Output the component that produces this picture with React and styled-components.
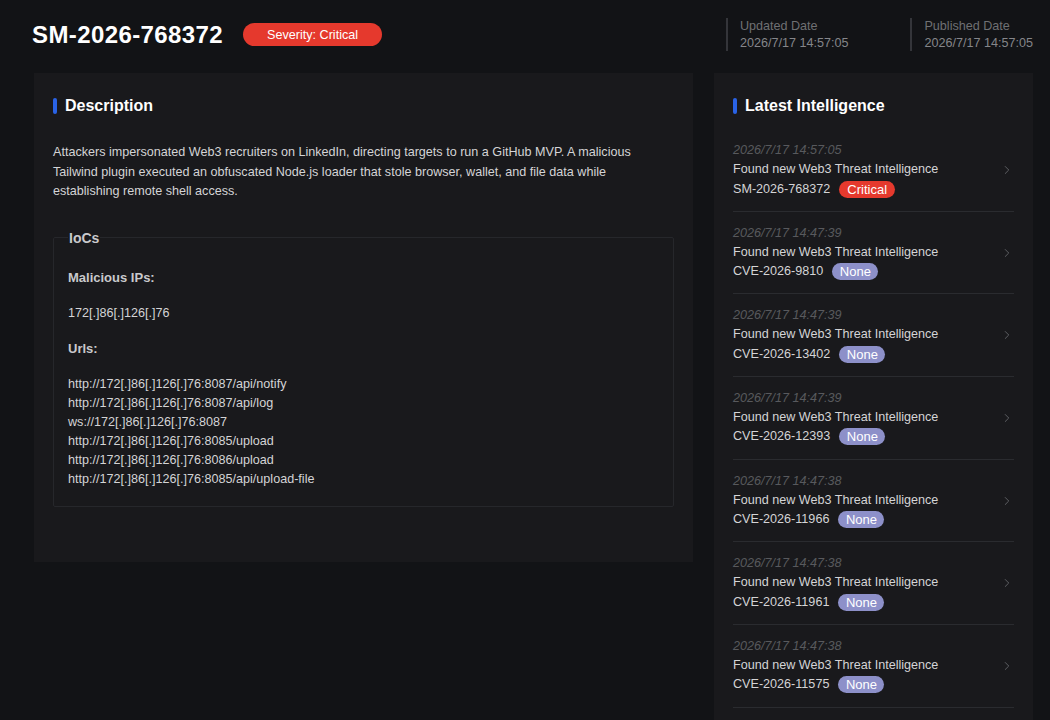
import React from "react";
import styled, { createGlobalStyle } from "styled-components";
import { ChevronRight } from "lucide-react";

const GlobalStyle = createGlobalStyle`
  html, body {
    margin: 0;
    padding: 0;
    background: #121316;
    font-family: "Liberation Sans", Arial, sans-serif;
  }
  * { box-sizing: border-box; }
`;

const Page = styled.div`
  height: 100vh;
  overflow: hidden;
  background: #121316;
`;

const Header = styled.header`
  display: flex;
  align-items: center;
  height: 69px;
  padding: 0 17px 0 32px;
`;

const Title = styled.h1`
  margin: 0;
  font-size: 24px;
  font-weight: 700;
  color: #fff;
  letter-spacing: 0.4px;
`;

const SeverityBadge = styled.span`
  display: inline-flex;
  align-items: center;
  height: 23px;
  margin-left: 20px;
  padding: 0 24px;
  border-radius: 12px;
  background: #e5392d;
  color: #fff;
  font-size: 12.6px;
`;

const Dates = styled.div`
  display: flex;
  gap: 62px;
  margin-left: auto;
`;

const DateBlock = styled.div`
  border-left: 2px solid #34353a;
  padding-left: 12px;
  display: flex;
  flex-direction: column;
  gap: 1px;
  font-size: 12.6px;
  line-height: 16px;
`;

const DateLabel = styled.span`
  color: #6f7073;
`;

const DateValue = styled.span`
  color: #85868a;
`;

const Main = styled.main`
  display: flex;
  align-items: flex-start;
  gap: 21px;
  padding: 4px 17px 0 34px;
`;

const Card = styled.section`
  background: #19191c;
  width: ${(p) => p.width}px;
  padding: ${(p) => p.pad};
  flex-shrink: 0;
`;

const SectionTitle = styled.h2`
  display: flex;
  align-items: center;
  gap: 8px;
  margin: 0;
  padding-top: 1px;
  font-size: 16px;
  line-height: 24px;
  font-weight: 700;
  color: #fff;

  &::before {
    content: "";
    width: 4px;
    height: 16px;
    border-radius: 2px;
    background: #2a63e6;
  }
`;

const Description = styled.p`
  margin: 25px 0 0;
  font-size: 12.6px;
  line-height: 19.5px;
  color: #d4d4d6;
`;

const IocBox = styled.fieldset`
  margin: 26px 0 0;
  padding: 0 14px 17px;
  border: 1px solid #26272b;
  border-radius: 2px;
`;

const Legend = styled.legend`
  padding: 0 1px;
  font-size: 14px;
  line-height: 20px;
  font-weight: 700;
  color: #c9c9cc;
`;

const IocLabel = styled.div`
  margin-top: ${(p) => p.top}px;
  font-size: 13px;
  line-height: 20px;
  font-weight: 700;
  color: #c9c9cc;
`;

const IocList = styled.div`
  margin-top: 16px;
  font-size: 12.6px;
  line-height: 19px;
  color: #d4d4d6;
`;

const FeedList = styled.div`
  margin-top: 11px;
  display: flex;
  flex-direction: column;
`;

const FeedItem = styled.div`
  display: flex;
  align-items: center;
  padding: 12px 0 11.67px;
  border-bottom: 1px solid #2a2b2f;
`;

const FeedBody = styled.div`
  flex: 1;
  display: flex;
  flex-direction: column;
  font-size: 12.6px;
  line-height: 19px;
  color: #d4d4d6;
`;

const FeedDate = styled.span`
  font-style: italic;
  color: #58595d;
`;

const FeedId = styled.div`
  display: flex;
  align-items: center;
  gap: 9px;
  height: 20px;
`;

const Tag = styled.span`
  display: inline-flex;
  align-items: center;
  height: 17px;
  padding: 0 ${(p) => (p.level === "Critical" ? 8 : 7.5)}px;
  border-radius: 9px;
  background: ${(p) => (p.level === "Critical" ? "#e5392d" : "#8d90c9")};
  color: #fff;
  font-size: 13px;
`;

const Chevron = styled(ChevronRight)`
  color: #66676b;
  flex-shrink: 0;
`;

const urls = [
  "http://172[.]86[.]126[.]76:8087/api/notify",
  "http://172[.]86[.]126[.]76:8087/api/log",
  "ws://172[.]86[.]126[.]76:8087",
  "http://172[.]86[.]126[.]76:8085/upload",
  "http://172[.]86[.]126[.]76:8086/upload",
  "http://172[.]86[.]126[.]76:8085/api/upload-file",
];

const feed = [
  { date: "2026/7/17 14:57:05", id: "SM-2026-768372", level: "Critical" },
  { date: "2026/7/17 14:47:39", id: "CVE-2026-9810", level: "None" },
  { date: "2026/7/17 14:47:39", id: "CVE-2026-13402", level: "None" },
  { date: "2026/7/17 14:47:39", id: "CVE-2026-12393", level: "None" },
  { date: "2026/7/17 14:47:38", id: "CVE-2026-11966", level: "None" },
  { date: "2026/7/17 14:47:38", id: "CVE-2026-11961", level: "None" },
  { date: "2026/7/17 14:47:38", id: "CVE-2026-11575", level: "None" },
];

export default function App() {
  return (
    <Page>
      <GlobalStyle />
      <Header>
        <Title>SM-2026-768372</Title>
        <SeverityBadge>Severity: Critical</SeverityBadge>
        <Dates>
          <DateBlock>
            <DateLabel>Updated Date</DateLabel>
            <DateValue>2026/7/17 14:57:05</DateValue>
          </DateBlock>
          <DateBlock>
            <DateLabel>Published Date</DateLabel>
            <DateValue>2026/7/17 14:57:05</DateValue>
          </DateBlock>
        </Dates>
      </Header>

      <Main>
        <Card width={659} pad="20px 19px 55px">
          <SectionTitle>Description</SectionTitle>
          <Description>
            Attackers impersonated Web3 recruiters on LinkedIn, directing targets to run a GitHub MVP. A malicious
            Tailwind plugin executed an obfuscated Node.js loader that stole browser, wallet, and file data while
            establishing remote shell access.
          </Description>
          <IocBox>
            <Legend>IoCs</Legend>
            <IocLabel top={20}>Malicious IPs:</IocLabel>
            <IocList>172[.]86[.]126[.]76</IocList>
            <IocLabel top={16}>Urls:</IocLabel>
            <IocList>
              {urls.map((u) => (
                <div key={u}>{u}</div>
              ))}
            </IocList>
          </IocBox>
        </Card>

        <Card width={319} pad="20px 19px 60px">
          <SectionTitle>Latest Intelligence</SectionTitle>
          <FeedList>
            {feed.map((f) => (
              <FeedItem key={f.id}>
                <FeedBody>
                  <FeedDate>{f.date}</FeedDate>
                  <span>Found new Web3 Threat Intelligence</span>
                  <FeedId>
                    {f.id}
                    <Tag level={f.level}>{f.level}</Tag>
                  </FeedId>
                </FeedBody>
                <Chevron size={14} strokeWidth={1.5} />
              </FeedItem>
            ))}
          </FeedList>
        </Card>
      </Main>
    </Page>
  );
}
